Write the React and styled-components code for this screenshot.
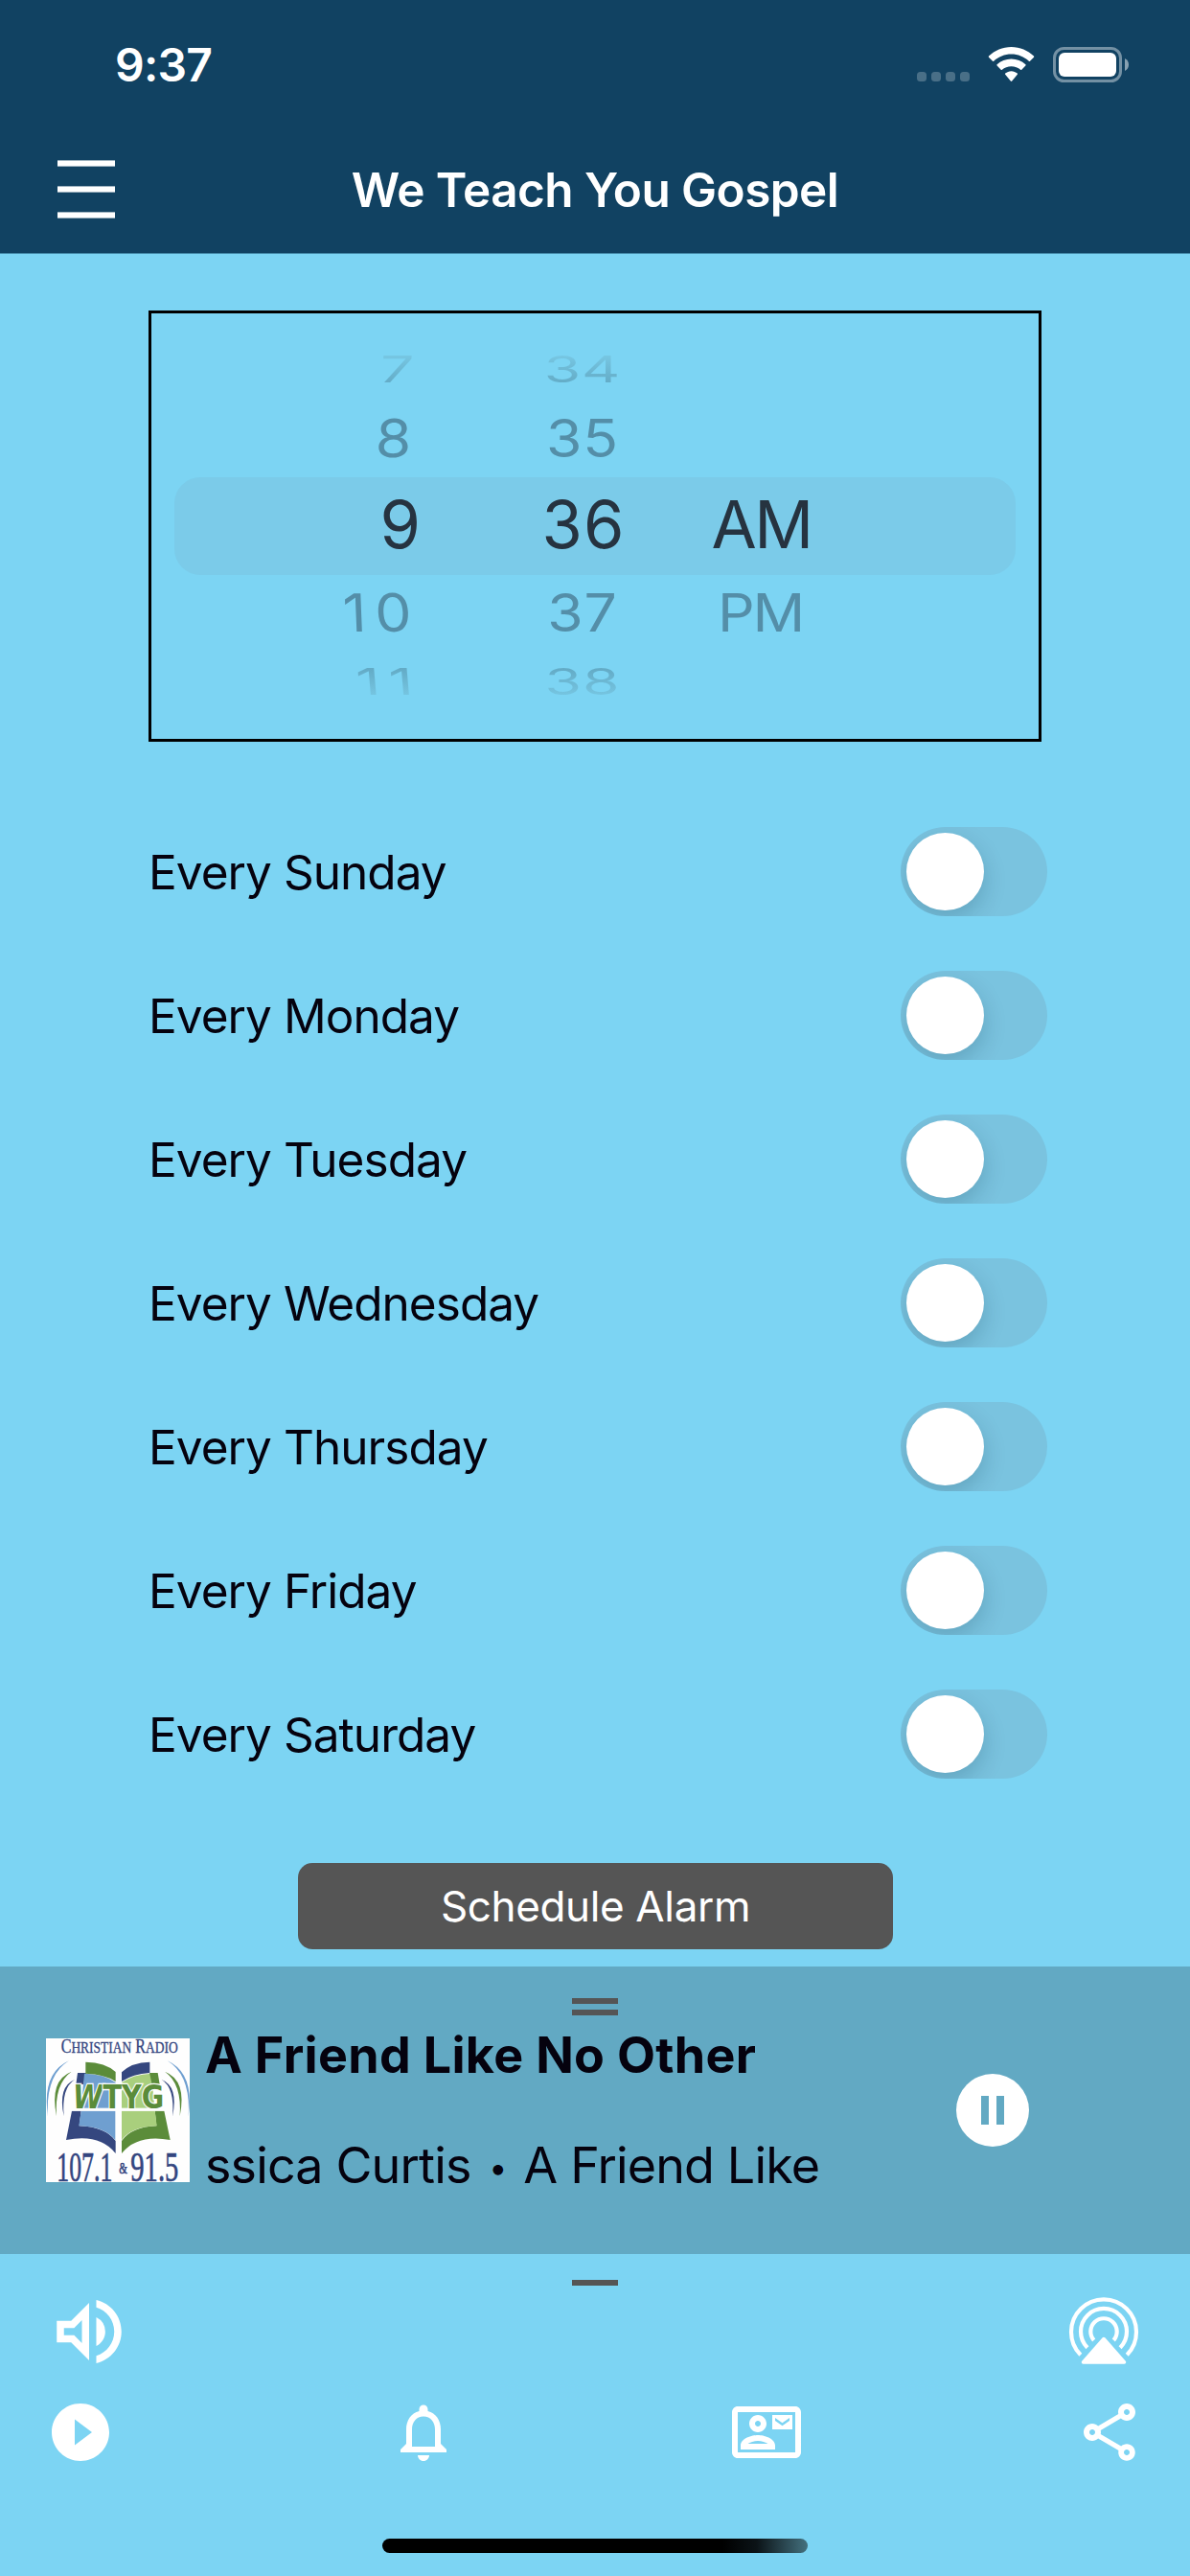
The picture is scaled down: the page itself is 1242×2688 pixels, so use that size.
import React, { useState } from 'react';
import styled, { createGlobalStyle, css } from 'styled-components';
import {
  MdNotificationsNone,
  MdOutlineContactMail,
  MdOutlineShare,
  MdOutlineVolumeUp,
  MdPlayCircleFilled,
} from 'react-icons/md';

const GlobalStyle = createGlobalStyle`
  body {
    margin: 0;
    background-color: #7cd4f3;
    font-family: Inter, 'Liberation Sans', sans-serif;
  }
`;

const Screen = styled.div`
  width: 1242px;
  height: 2688px;
  display: flex;
  flex-direction: column;
  overflow: hidden;
  background-color: #7cd4f3;
  color: #05020e;
`;

const Header = styled.header`
  background-color: #114262;
  border-bottom: 1px solid #468baa;
  color: white;
`;

const StatusBar = styled.div`
  display: flex;
  align-items: center;
  justify-content: space-between;
  box-sizing: border-box;
  height: 132px;
  padding: 3px 64px 0 120px;
`;

const Clock = styled.div`
  font-size: 48px;
  font-weight: 600;
  letter-spacing: -0.8px;
`;

const NavBar = styled.div`
  display: grid;
  grid-template-columns: 60px 1fr 60px;
  align-items: center;
  height: 132px;
  padding: 0 60px;
`;

const MenuButton = styled.button`
  display: flex;
  flex-direction: column;
  gap: 20px;
  padding: 0;
  margin-top: -2px;
  border: none;
  background: none;
`;

const MenuLine = styled.span`
  height: 7px;
  width: 60px;
  background: linear-gradient(to bottom, #9fb3c0 1px, white 1px, white 6px, #9fb3c0 6px);
`;

const Title = styled.h1`
  margin: 0;
  font-size: 49.5px;
  font-weight: 600;
  letter-spacing: -0.57px;
  text-align: center;
`;

const Picker = styled.section`
  position: relative;
  display: flex;
  box-sizing: border-box;
  width: 932px;
  height: 450px;
  margin: 59px 0 0 155px;
  padding-top: 22px;
  border: 3px solid black;
`;

const PickerHighlight = styled.div`
  position: absolute;
  top: 171px;
  left: 24px;
  right: 24px;
  height: 102px;
  border-radius: 27px;
  background-color: #7bcbe9;
`;

const Wheel = styled.div`
  position: relative;
  display: flex;
  flex-direction: column;
  width: ${(props) => props.$width}px;
  margin-left: ${(props) => props.$offset || 0}px;
  text-align: ${(props) => props.$align || 'center'};
  letter-spacing: ${(props) => props.$spacing || 0}px;
`;

const WheelItem = styled.div`
  height: 72px;
  line-height: 72px;
  font-size: 68.5px;
  color: #548ea8;
  transform-origin: ${(props) => (props.$side ? 'calc(100% - 84px) 50%' : '50% 50%')};

  ${(props) =>
    props.$distance === 0 &&
    css`
      height: 102px;
      line-height: 102px;
      margin: 4px 0;
      color: #263340;
    `}

  ${(props) =>
    Math.abs(props.$distance) === 1 &&
    css`
      transform: translate(-1px, 1px) scale(0.885, 0.8) skewX(${props.$side ? props.$distance * 2 : 0}deg);
    `}

  ${(props) =>
    Math.abs(props.$distance) === 2 &&
    css`
      color: transparent;
      background: linear-gradient(${props.$distance < 0 ? 'to bottom' : 'to top'}, #76c6e2 15%, #63abc6 85%);
      background-clip: text;
      transform: translate(-1px, 1px) scale(0.91, 0.56) skewX(${props.$side ? props.$distance * 1.5 : 0}deg);
    `}
`;

const DayList = styled.div`
  margin-top: 60px;
  padding: 0 149px 0 155px;
`;

const DayRow = styled.div`
  display: flex;
  align-items: center;
  justify-content: space-between;
  box-sizing: border-box;
  height: 150px;
  padding-top: 1px;
`;

const DayLabel = styled.span`
  font-size: 49.5px;
  letter-spacing: -0.95px;
`;

const Switch = styled.button`
  width: 153px;
  height: 93px;
  padding: 6px;
  border: none;
  border-radius: 46.5px;
  overflow: hidden;
  background-color: #7ac3df;
`;

const SwitchKnob = styled.span`
  display: block;
  width: 81px;
  height: 81px;
  border-radius: 50%;
  background-color: white;
  box-shadow: 0 9px 24px rgba(0, 40, 60, 0.2);
  transform: translateX(${(props) => (props.$on ? 60 : 0)}px);
`;

const ScheduleButton = styled.button`
  width: 621px;
  height: 90px;
  margin: 60px 0 0 311px;
  padding: 0;
  border: none;
  border-radius: 15px;
  background-color: #555555;
  color: white;
  font-family: inherit;
  font-size: 44px;
  letter-spacing: -0.36px;
`;

const Player = styled.section`
  display: flex;
  flex-direction: column;
  align-items: center;
  box-sizing: border-box;
  height: 300px;
  margin-top: 18px;
  padding-top: 33px;
  background-color: #62a9c3;
`;

const HandleBar = styled.div`
  width: 48px;
  height: 6px;
  margin-bottom: ${(props) => props.$gap || 0}px;
  background-color: #555555;
`;

const NowPlaying = styled.div`
  display: flex;
  align-items: center;
  align-self: stretch;
  height: 198px;
  padding: 0 168px 0 48px;
`;

const TrackInfo = styled.div`
  display: flex;
  flex-direction: column;
  justify-content: space-between;
  width: 650px;
  height: 181px;
  margin-left: 16px;
  overflow: hidden;
  white-space: nowrap;
  font-size: 52px;
  line-height: 66px;
`;

const TrackTitle = styled.div`
  font-weight: 700;
  letter-spacing: 0.33px;
`;

const TrackArtist = styled.div`
  letter-spacing: -0.85px;
`;

const Bullet = styled.span`
  margin: 0 4px 0 5px;
  font-size: 34px;
  line-height: 1;
  vertical-align: 4px;
`;

const PauseButton = styled.button`
  display: flex;
  align-items: center;
  justify-content: center;
  gap: 8px;
  width: 76px;
  height: 76px;
  margin-left: auto;
  padding: 0;
  border: none;
  border-radius: 50%;
  background-color: white;
`;

const PauseBar = styled.span`
  width: 8px;
  height: 30px;
  background-color: #62a9c3;
`;

const BottomPanel = styled.footer`
  display: flex;
  flex-direction: column;
  align-items: center;
  padding-top: 27px;
`;

const ToolRow = styled.div`
  display: flex;
  align-items: center;
  align-self: stretch;
  justify-content: space-between;
  margin-top: ${(props) => props.$top}px;
  padding: 0 48px;
  color: white;

  svg {
    display: block;
  }
`;

const HomeIndicator = styled.div`
  width: 444px;
  height: 15px;
  margin-top: 75px;
  border-radius: 7.5px;
  background: linear-gradient(to right, black 80%, #0b1317 88%, #44717f 100%);
`;

const StatusIcons = () => (
  <svg width="222" height="40" viewBox="956 48 222 40">
    <g fill="white" fillOpacity="0.24">
      <rect x="957" y="75" width="10" height="10" rx="3.5" />
      <rect x="972" y="75" width="10" height="10" rx="3.5" />
      <rect x="987" y="75" width="10" height="10" rx="3.5" />
      <rect x="1002" y="75" width="10" height="10" rx="3.5" />
    </g>
    <g fill="white">
      <path d="M1055.500 49c9 0 17.300 3.600 23.500 9.600q.6.600 0 1.200l-4 4q-.6.600-1.200 0c-4.900-4.500-11.300-7.200-18.300-7.200s-13.400 2.700-18.300 7.200q-.6.600-1.200 0l-4-4q-.6-.6 0-1.200c6.200-6 14.500-9.600 23.500-9.600z" />
      <path d="M1055.500 61.500c5.700 0 10.900 2.200 14.900 5.800q.6.600 0 1.200l-4.100 4.300q-.6.600-1.200 0c-2.500-2.300-5.900-3.600-9.600-3.600s-7.100 1.300-9.600 3.600q-.6.600-1.200 0l-4.100-4.300q-.6-.6 0-1.200c4-3.600 9.200-5.800 14.900-5.800z" />
      <path d="M1055.500 74.200c2.400 0 4.600.9 6.300 2.400q.6.600 0 1.200l-5.600 6.800q-.7.800-1.400 0l-5.600-6.800q-.6-.6 0-1.200c1.700-1.500 3.900-2.400 6.300-2.400z" />
      <rect x="1105" y="55" width="60" height="25" rx="6" />
      <path d="M1174 61c2.800 1.200 4 3.800 4 6.500s-1.200 5.300-4 6.500z" fillOpacity="0.5" />
    </g>
    <rect x="1100.500" y="50.500" width="69" height="34" rx="10" fill="none" stroke="white" strokeOpacity="0.42" strokeWidth="3" />
  </svg>
);

const AirplayIcon = () => (
  <svg width="84" height="90" viewBox="-42 -45 84 90">
    <g fill="none" stroke="currentColor" strokeWidth="4.200">
      <path d="M-24.200 24.200A34 34 0 1 1 24.200 24.200" />
      <path d="M-17.100 16.800A24 24 0 1 1 17.100 16.800" />
      <path d="M-10.300 9A13.700 13.700 0 1 1 10.300 9" />
    </g>
    <path
      d="M0 7.500L21.500 32H-21.500Z"
      fill="currentColor"
      stroke="currentColor"
      strokeWidth="3.500"
      strokeLinejoin="round"
    />
  </svg>
);

const SignalWaves = () => (
  <g>
    <path d="M126 151Q52 196 60 326Q40 190 126 151Z" fill="#6f9fd0" />
    <path d="M134 185Q80 222 87 325Q64 212 134 185Z" fill="#5b8c3a" />
    <path d="M144 210Q102 236 110 325Q90 232 144 210Z" fill="#35477f" />
  </g>
);

const StationLogo = () => (
  <svg width="150" height="150" viewBox="54 81 450 450">
    <rect x="54" y="81" width="450" height="450" fill="#fefefe" />
    <text
      x="101"
      y="126"
      fontSize="62"
      fill="#33457f"
      stroke="#33457f"
      fontFamily="'Liberation Serif', serif"
      textLength="366"
      lengthAdjust="spacingAndGlyphs"
    >
      C<tspan fontSize="52">HRISTIAN</tspan> R<tspan fontSize="52">ADIO</tspan>
    </text>
    <SignalWaves />
    <g transform="matrix(-1 0 0 1 560 0)">
      <SignalWaves />
    </g>
    <path d="M153 189H180L171 225H148Z" fill="#35477f" />
    <path d="M174 191Q236 192 272 219V300H164Z" fill="#6f9fd0" />
    <path d="M178 155Q240 156 272 186V216Q238 193 178 191Z" fill="#5b8c3a" />
    <path d="M291 187Q322 156 379 155V189Q326 192 291 216Z" fill="#35477f" />
    <path d="M291 219Q326 194 384 191L394 300H291Z" fill="#a9cf7d" />
    <path d="M378 189H404L410 225H386Z" fill="#5b8c3a" />
    <path d="M135 308H164L158 355Q240 358 272 402V441Q222 378 117 399Z" fill="#35477f" />
    <path d="M164 308H271V400Q240 358 157 355Z" fill="#6f9fd0" />
    <path d="M424 308H395L400 355Q322 358 291 402V441Q340 380 443 399Z" fill="#5b8c3a" />
    <path d="M395 308H291V400Q320 358 401 355Z" fill="#a9cf7d" />
    <rect x="130" y="299" width="300" height="9" fill="#fefefe" />
    <text
      x="138"
      y="300"
      fill="#5b8c3a"
      stroke="#fefefe"
      strokeWidth="8"
      paintOrder="stroke"
      fontFamily="'DejaVu Sans', sans-serif"
      fontWeight="700"
      fontSize="102"
      textLength="286"
      lengthAdjust="spacingAndGlyphs"
    >
      <tspan fontStyle="italic">W</tspan>TYG
    </text>
    <g fill="#33457f" stroke="#33457f" strokeWidth="2" fontFamily="'Liberation Serif', serif">
      <text x="88" y="529" fontSize="130" textLength="174" lengthAdjust="spacingAndGlyphs">107.1</text>
      <text x="283" y="505" fontSize="50" textLength="26" lengthAdjust="spacingAndGlyphs">&amp;</text>
      <text x="319" y="529" fontSize="130" textLength="150" lengthAdjust="spacingAndGlyphs">91.5</text>
    </g>
  </svg>
);

const hours = ['7', '8', '9', '10', '11'];
const minutes = ['34', '35', '36', '37', '38'];
const meridiems = ['', '', 'AM', 'PM', ''];
const days = ['Sunday', 'Monday', 'Tuesday', 'Wednesday', 'Thursday', 'Friday', 'Saturday'];

const PickerWheel = ({ values, side, ...layout }) => (
  <Wheel {...layout}>
    {values.map((value, index) => (
      <WheelItem key={index} $distance={index - 2} $side={side}>
        {value}
      </WheelItem>
    ))}
  </Wheel>
);

const App = () => {
  const [enabled, setEnabled] = useState({});

  const toggleDay = (day) => {
    setEnabled((prev) => ({ ...prev, [day]: !prev[day] }));
  };

  return (
    <Screen>
      <GlobalStyle />
      <Header>
        <StatusBar>
          <Clock>9:37</Clock>
          <StatusIcons />
        </StatusBar>
        <NavBar>
          <MenuButton aria-label="Menu">
            <MenuLine />
            <MenuLine />
            <MenuLine />
          </MenuButton>
          <Title>We Teach You Gospel</Title>
        </NavBar>
      </Header>

      <Picker>
        <PickerHighlight />
        <PickerWheel values={hours} side $width={291} $align="right" $spacing={10} />
        <PickerWheel values={minutes} $width={230} $offset={45} $spacing={1} />
        <PickerWheel values={meridiems} $width={139} $offset={1} $spacing={-2.5} />
      </Picker>

      <DayList>
        {days.map((day) => (
          <DayRow key={day}>
            <DayLabel>Every {day}</DayLabel>
            <Switch aria-label={day} onClick={() => toggleDay(day)}>
              <SwitchKnob $on={enabled[day]} />
            </Switch>
          </DayRow>
        ))}
      </DayList>
      <ScheduleButton>Schedule Alarm</ScheduleButton>

      <Player>
        <HandleBar $gap={6} />
        <HandleBar />
        <NowPlaying>
          <StationLogo />
          <TrackInfo>
            <TrackTitle>A Friend Like No Other</TrackTitle>
            <TrackArtist>
              ssica Curtis <Bullet>•</Bullet> A Friend Like
            </TrackArtist>
          </TrackInfo>
          <PauseButton aria-label="Pause">
            <PauseBar />
            <PauseBar />
          </PauseButton>
        </NowPlaying>
      </Player>

      <BottomPanel>
        <HandleBar />
        <ToolRow $top={3}>
          <MdOutlineVolumeUp size={90} />
          <AirplayIcon />
        </ToolRow>
        <ToolRow $top={24}>
          <MdPlayCircleFilled size={72} />
          <MdNotificationsNone size={72} />
          <MdOutlineContactMail size={72} />
          <MdOutlineShare size={72} />
        </ToolRow>
        <HomeIndicator />
      </BottomPanel>
    </Screen>
  );
};

export default App;
